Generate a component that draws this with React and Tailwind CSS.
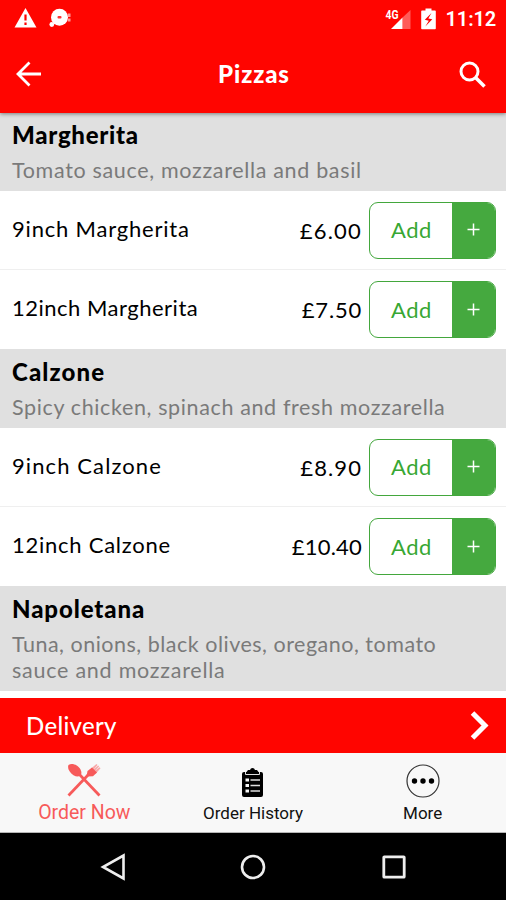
const MENU = [
  {
    name: "Margherita",
    nameTracking: "tracking-[0.7px]",
    description: [{ text: "Tomato sauce, mozzarella and basil", tracking: "tracking-[0.67px]" }],
    height: "h-[78px] pt-[8px]",
    items: [
      { label: "9inch Margherita", labelTracking: "tracking-[0.8px]", price: "£6.00", priceTracking: "tracking-[1.2px]" },
      { label: "12inch Margherita", labelTracking: "tracking-[0.5px]", price: "£7.50", priceTracking: "tracking-[0.8px]" },
    ],
  },
  {
    name: "Calzone",
    nameTracking: "tracking-[1.1px]",
    description: [{ text: "Spicy chicken, spinach and fresh mozzarella", tracking: "tracking-[0.63px]" }],
    height: "h-[79px] pt-[9px]",
    items: [
      { label: "9inch Calzone", labelTracking: "tracking-[1.1px]", price: "£8.90", priceTracking: "tracking-[1.1px]" },
      { label: "12inch Calzone", labelTracking: "tracking-[0.75px]", price: "£10.40", priceTracking: "tracking-[0.2px]" },
    ],
  },
  {
    name: "Napoletana",
    nameTracking: "tracking-[0.9px]",
    description: [
      { text: "Tuna, onions, black olives, oregano, tomato", tracking: "tracking-[0.5px]" },
      { text: "sauce and mozzarella", tracking: "tracking-[0.75px]" },
    ],
    height: "h-[105px] pt-[9px]",
    items: [],
  },
];

function StatusBar() {
  return (
    <div className="flex h-[37px] items-center justify-between pl-[14px] pr-[10px]">
      <div className="flex items-center gap-[12px] pb-[2px]">
        <svg width="23" height="20" viewBox="0 0 23 20">
          <path d="M11.5 0 22.5 19.5H0.5Z" fill="#fff" />
          <path d="M11.5 6.500v6M11.5 14.500v2.500" stroke="#f00" strokeWidth="2.200" />
        </svg>
        <svg width="23" height="20" viewBox="0 0 23 20">
          <circle cx="10.500" cy="9.300" r="8.500" fill="#fff" />
          <circle cx="2.800" cy="16.500" r="2.400" fill="#fff" />
          <rect x="8.500" y="8" width="4" height="2.600" rx="1" fill="#f33" />
          <path d="M19 5.500h2.500v3.500h-2.500zM19 10.500h2.500v3h-2.500z" fill="#fff" opacity=".6" />
        </svg>
      </div>
      <div className="flex items-center">
        <svg width="26" height="22" viewBox="0 0 26 22" className="mr-[10px]">
          <path d="M6 21 17.500 9.500V21Z" fill="#fff" />
          <path d="M17.500 9.500 25.500 2V21H17.500Z" fill="#fff" opacity=".35" />
          <text x="0.500" y="10.500" fontSize="12.500" fontWeight="700" fontFamily="Roboto, sans-serif" fill="#fff" textLength="13" lengthAdjust="spacingAndGlyphs">4G</text>
        </svg>
        <svg width="15" height="22" viewBox="0 0 15 22" className="mr-[10px]">
          <path d="M4.500 0.500h6v2H14a.8.8 0 0 1 .8.8V20.500a.8.8 0 0 1-.8.8H1a.8.8 0 0 1-.8-.8V3.300a.8.8 0 0 1 .8-.8h3.500Z" fill="#fff" />
          <path d="M10.500 5 3.800 11.800l4 1-3.500 5.700 7-7.200-4-.8Z" fill="#f00" />
        </svg>
        <span className="font-[Roboto,sans-serif] text-[20px] font-semibold leading-none tracking-[-0.15px]">11:12</span>
      </div>
    </div>
  );
}

function AppBar() {
  return (
    <div className="flex h-[76px] items-center justify-between pb-[2px] pl-4 pr-[20px]">
      <svg width="26" height="26" viewBox="0 0 26 26" fill="none" stroke="#fff" strokeWidth="2.800">
        <path d="M25 13H2M13.500 1.500 2 13 13.500 24.500" />
      </svg>
      <h1 className="pl-[7px] text-[24px] font-black leading-none tracking-[0.9px]">Pizzas</h1>
      <svg width="27" height="27" viewBox="0 0 27 27" fill="none" stroke="#fff" strokeWidth="3">
        <circle cx="10.500" cy="10.500" r="8.500" />
        <path d="M16.500 16.500 25.500 25.500" strokeWidth="3.600" />
      </svg>
    </div>
  );
}

function AddButton() {
  return (
    <button className="flex h-[57px] w-[127px] overflow-hidden rounded-[9px] border border-[#43a73d] text-[22px]">
      <span className="flex flex-1 items-center justify-center pb-px pl-px text-[#38a733] tracking-[0.5px]">Add</span>
      <span className="flex w-[43px] items-center justify-center bg-[#45a93f] text-white">
        <svg width="13" height="13" viewBox="0 0 13 13" stroke="#fff" strokeWidth="1.500" className="mb-px">
          <path d="M6.500 0.500v12M0.500 6.500h12" />
        </svg>
      </span>
    </button>
  );
}

function ItemRow({ item }) {
  return (
    <div className="flex h-[79px] items-center border-b border-[#efefef] pl-3 pr-[10px] last:border-b-0">
      <span className={`flex-1 pb-[4px] text-[22px] ${item.labelTracking}`}>{item.label}</span>
      <span className={`mr-[7px] text-[22px] ${item.priceTracking}`}>{item.price}</span>
      <AddButton />
    </div>
  );
}

function Section({ section }) {
  return (
    <section>
      <header className={`${section.height} bg-[#e0e0e0] pl-3`}>
        <h2 className={`text-[24px] font-black leading-[28px] ${section.nameTracking}`}>{section.name}</h2>
        <div className="mt-2 text-[21.500px] leading-[26px] text-[#7a7a7a]">
          {section.description.map((line) => (
            <p key={line.text} className={`whitespace-nowrap ${line.tracking}`}>{line.text}</p>
          ))}
        </div>
      </header>
      <div>
        {section.items.map((item) => (
          <ItemRow key={item.label} item={item} />
        ))}
      </div>
    </section>
  );
}

function TabBar() {
  return (
    <nav className="grid h-[80px] grid-cols-3 border-b border-[#b5b5b5] bg-[#f8f8f8] font-[Roboto,sans-serif] text-[#111]">
      <div className="flex flex-col items-center pt-[10px] text-[#f75a5a]">
        <svg width="34" height="34" viewBox="0 0 34 34" fill="currentColor">
          <path d="M1.500 2C5-0.500 11 2 13.500 6.500c1.500 3 1 5-.5 6.300-1.600 1.200-4 1-6.500-.6C2.500 9.500 0 5 1.500 2Z" />
          <path d="m11 12 2-2 20.500 21.500-2 2Z" />
          <path d="m0.500 31.500 20-21 2 2L2.500 33.500Z" />
          <path d="M19.500 13.500 20.500 8 25 4.500 30 9.500 26 13.300Z" />
          <path d="M24 5.500 29.500 1l1 1-4.500 5 5.200-4.500.9.900L27.500 8.200 32.500 4.300l1 1L28.500 11Z" opacity=".5" />
        </svg>
        <span className="mt-[6px] text-[19.500px] leading-[20px]">Order Now</span>
      </div>
      <div className="flex flex-col items-center pt-[13px]">
        <svg width="21" height="32" viewBox="0 0 21 32">
          <path d="M2 6h2.500l1.500-2h2a2.600 2.600 0 0 1 5 0h2l1.500 2H19a2 2 0 0 1 2 2v21a2 2 0 0 1-2 2H2a2 2 0 0 1-2-2V8a2 2 0 0 1 2-2Z" fill="#000" />
          <path d="M3.500 6v2.500h14V6" stroke="#f8f8f8" strokeWidth="0.900" fill="none" />
          <path d="M3.500 14h3.500M3.500 19.500h3.500M3.500 25h3.500" stroke="#f8f8f8" strokeWidth="3" />
          <path d="M8.500 14h9.500M8.500 19.500h9.500M8.500 25h9.500" stroke="#ddd" strokeWidth="1.700" />
        </svg>
        <span className="mt-[5px] text-[17px] leading-[20px]">Order History</span>
      </div>
      <div className="flex flex-col items-center pt-[11px] pl-[2px]">
        <svg width="34" height="34" viewBox="0 0 34 34">
          <circle cx="17" cy="17" r="16" fill="none" stroke="#333" strokeWidth="1.200" />
          <circle cx="8.500" cy="17" r="2.700" />
          <circle cx="17" cy="17" r="2.700" />
          <circle cx="25.500" cy="17" r="2.700" />
        </svg>
        <span className="mt-[5px] text-[17px] leading-[20px]">More</span>
      </div>
    </nav>
  );
}

function SystemNav() {
  return (
    <div className="grid flex-1 grid-cols-[1fr_112px_1fr] items-center bg-black">
      <svg width="26" height="28" viewBox="0 0 26 28" className="ml-[100px]" fill="none" stroke="#eee" strokeWidth="2.600">
        <path d="M23.500 2.500v23L3 14Z" />
      </svg>
      <svg width="26" height="26" viewBox="0 0 26 26" className="mx-auto" fill="none" stroke="#eee" strokeWidth="2.600">
        <circle cx="13" cy="13" r="11" />
      </svg>
      <svg width="24" height="24" viewBox="0 0 24 24" className="ml-[73px]" fill="none" stroke="#eee" strokeWidth="2.800">
        <rect x="1.800" y="1.800" width="20.400" height="20.400" rx="0.500" />
      </svg>
    </div>
  );
}

export default function App() {
  return (
    <div className="flex h-[900px] w-[506px] flex-col overflow-hidden bg-white font-[Lato,sans-serif] text-black">
      <div className="relative bg-[#ff0500] text-white shadow-[0_1px_4px_rgba(0,0,0,0.45)]">
        <StatusBar />
        <AppBar />
      </div>
      <main className="h-[585px]">
        {MENU.map((section) => (
          <Section key={section.name} section={section} />
        ))}
      </main>
      <div className="flex h-[55px] items-center justify-between bg-[#ff0500] pl-[26px] pr-[17px] text-white">
        <span className="text-[24px] font-medium tracking-[0.300px]">Delivery</span>
        <svg width="19" height="29" viewBox="0 0 19 29" fill="none" stroke="#fff" strokeWidth="5">
          <path d="M2.500 2 15 14.500 2.500 27" />
        </svg>
      </div>
      <TabBar />
      <SystemNav />
    </div>
  );
}
